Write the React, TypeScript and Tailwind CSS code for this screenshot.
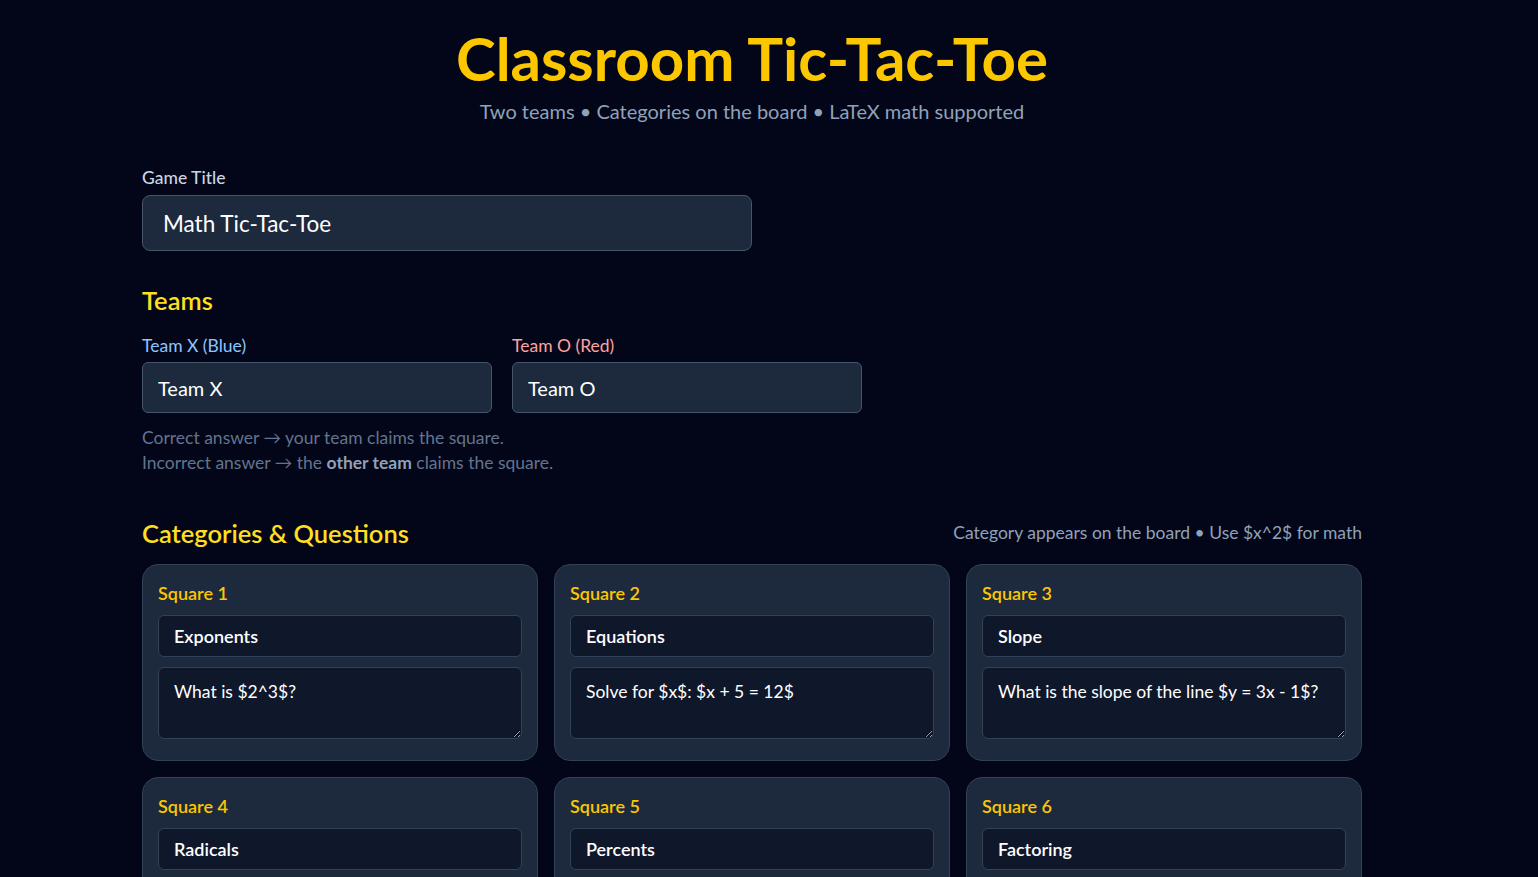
const squares = [
  { category: 'Exponents', question: 'What is $2^3$?' },
  { category: 'Equations', question: 'Solve for $x$: $x + 5 = 12$' },
  { category: 'Slope', question: 'What is the slope of the line $y = 3x - 1$?' },
  { category: 'Radicals', question: 'What is $\\sqrt{49}$?' },
  { category: 'Percents', question: 'What is 25% of 80?' },
  { category: 'Factoring', question: 'Factor $x^2 - 9$' },
];

function SquareCard({ index, category, question }: { index: number; category: string; question: string }) {
  return (
    <div className="rounded-2xl border border-slate-700 bg-slate-800 px-[15px] pt-[14px] pb-[21px]">
      <div className="text-lg leading-7 font-semibold text-yellow-400 mb-2">Square {index + 1}</div>
      <input
        defaultValue={category}
        className="block w-full h-[42px] rounded-md border border-slate-700 bg-slate-900 px-[15px] text-lg font-semibold text-white outline-none"
      />
      <textarea
        defaultValue={question}
        className="block w-full h-[72px] mt-[10px] rounded-md border border-slate-700 bg-slate-900 px-[15px] py-[12px] text-[17.5px] leading-6 text-white outline-none"
      />
    </div>
  );
}

export default function App() {
  return (
    <div
      className="min-h-screen bg-slate-950 pr-[34px] text-slate-100"
      style={{ fontFamily: '"Segoe UI", Lato, "Noto Sans", sans-serif' }}
    >
      <main className="mx-auto max-w-[1220px] pt-[28px] pb-10">
        <header className="text-center">
          <h1 className="text-[60px] leading-[60px] font-bold text-yellow-400">Classroom Tic-Tac-Toe</h1>
          <p className="mt-[9px] text-xl leading-7 text-slate-400">
            Two teams • Categories on the board • LaTeX math supported
          </p>
        </header>

        {/* Game title */}
        <section className="mt-[41px]">
          <label className="block text-[17.5px] leading-6 font-medium text-slate-300 mb-[5px]">Game Title</label>
          <input
            defaultValue="Math Tic-Tac-Toe"
            className="block w-[610px] h-[56px] rounded-lg border border-slate-600 bg-slate-800 px-5 text-[22.5px] text-white outline-none"
          />
        </section>

        {/* Teams */}
        <section className="mt-[33px]">
          <h2 className="text-[25.5px] leading-8 font-semibold text-yellow-300">Teams</h2>
          <div className="mt-[18px] grid grid-cols-2 gap-5 max-w-[720px]">
            <div>
              <label className="block text-[17.5px] leading-6 text-blue-300 mb-[4px]">Team X (Blue)</label>
              <input
                defaultValue="Team X"
                className="block w-full h-[51px] rounded-md border border-slate-600 bg-slate-800 px-[15px] text-xl text-white outline-none"
              />
            </div>
            <div>
              <label className="block text-[17.5px] leading-6 text-red-300 mb-[4px]">Team O (Red)</label>
              <input
                defaultValue="Team O"
                className="block w-full h-[51px] rounded-md border border-slate-600 bg-slate-800 px-[15px] text-xl text-white outline-none"
              />
            </div>
          </div>
          <p className="mt-[12px] text-[17.5px] leading-[25px] text-slate-500">
            Correct answer → your team claims the square.
            <br />
            Incorrect answer → the <b className="font-bold text-slate-400">other team</b> claims the square.
          </p>
        </section>

        {/* Categories */}
        <section className="mt-[42px]">
          <div className="flex items-center justify-between mb-[15px]">
            <h2 className="text-[25.5px] leading-8 font-semibold text-yellow-300">Categories &amp; Questions</h2>
            <span className="text-[17.5px] text-slate-400">Category appears on the board • Use $x^2$ for math</span>
          </div>
          <div className="grid grid-cols-3 gap-4">
            {squares.map((s, i) => (
              <SquareCard key={i} index={i} category={s.category} question={s.question} />
            ))}
          </div>
        </section>
      </main>
    </div>
  );
}
